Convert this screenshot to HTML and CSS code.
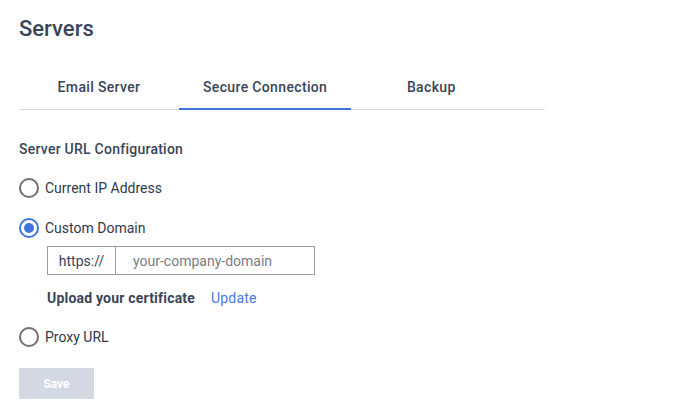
FILE: index.html
```html
<!DOCTYPE html>
<html>
<head>
<meta charset="utf-8">
<link rel="stylesheet" href="styles.css">
</head>
<body>
<div class="page">
  <h1 class="title">Servers</h1>
  <div class="tabs">
    <div class="tab">Email Server</div>
    <div class="tab active">Secure Connection</div>
    <div class="tab">Backup</div>
  </div>
  <div class="section">
    <div class="section-title">Server URL Configuration</div>
    <label class="radio-row">
      <span class="radio"></span>
      <span class="radio-label">Current IP Address</span>
    </label>
    <label class="radio-row">
      <span class="radio checked"></span>
      <span class="radio-label">Custom Domain</span>
    </label>
    <div class="sub">
      <div class="input-group">
        <span class="prefix">https://</span>
        <span class="field">your-company-domain</span>
      </div>
      <div class="cert">
        <span class="cert-label">Upload your certificate</span>
        <a class="link">Update</a>
      </div>
    </div>
    <label class="radio-row">
      <span class="radio"></span>
      <span class="radio-label">Proxy URL</span>
    </label>
    <button class="save">Save</button>
  </div>
</div>
</body>
</html>
```

FILE: styles.css
```css
* { box-sizing: border-box; }
body {
  margin: 0;
  background: #ffffff;
  font-family: Roboto, "Liberation Sans", sans-serif;
  color: #3a4557;
}
.page {
  padding: 14px 0 0 19px;
  width: 545px;
}
.title {
  margin: 0;
  font-size: 22px;
  font-weight: 500;
  line-height: 30px;
  color: #3a4557;
}
.tabs {
  display: flex;
  margin-top: 27px;
  border-bottom: 1px solid #d5dbe7;
}
.tab {
  min-width: 160px;
  padding: 0 24px;
  height: 38px;
  line-height: 32px;
  text-align: center;
  font-size: 14px;
  font-weight: 500;
  letter-spacing: 0.35px;
  color: #3a4557;
}
.tab.active {
  border-bottom: 2px solid #3e74dc;
  margin-bottom: -1px;
  height: 39px;
}
.section {
  padding-top: 30px;
}
.section-title {
  font-size: 14px;
  font-weight: 500;
  letter-spacing: 0.25px;
  line-height: 18px;
  color: #3a4557;
}
.radio-row {
  display: flex;
  align-items: center;
  gap: 6px;
  margin-top: 20px;
  height: 20px;
}
.radio {
  width: 20px;
  height: 20px;
  border-radius: 50%;
  border: 2px solid #6f6f6f;
  display: flex;
  align-items: center;
  justify-content: center;
}
.radio.checked {
  border-color: #3e74dc;
}
.radio.checked::after {
  content: "";
  width: 10px;
  height: 10px;
  border-radius: 50%;
  background: #3e74dc;
}
.radio-label {
  font-size: 14px;
  color: #2f3a4a;
}
.sub {
  padding-left: 28px;
}
.input-group {
  display: flex;
  margin-top: 8px;
  width: 268px;
  height: 29px;
  border: 1px solid #9e9e9e;
  font-size: 14px;
}
.prefix {
  width: 68px;
  border-right: 1px solid #9e9e9e;
  display: flex;
  align-items: center;
  justify-content: center;
  color: #3a4557;
}
.field {
  display: flex;
  align-items: center;
  padding-left: 17px;
  color: #777d85;
}
.cert {
  display: flex;
  gap: 16px;
  margin-top: 14px;
  font-size: 14px;
  line-height: 18px;
}
.cert-label {
  font-weight: 700;
  letter-spacing: 0.2px;
  color: #3a4557;
}
.link {
  color: #4a78e0;
  letter-spacing: 0.2px;
}
.save {
  display: block;
  margin-top: 21px;
  width: 75px;
  height: 31px;
  border: none;
  background: #d3d8e3;
  color: #ffffff;
  font-family: inherit;
  font-size: 12px;
  font-weight: 700;
}
```
